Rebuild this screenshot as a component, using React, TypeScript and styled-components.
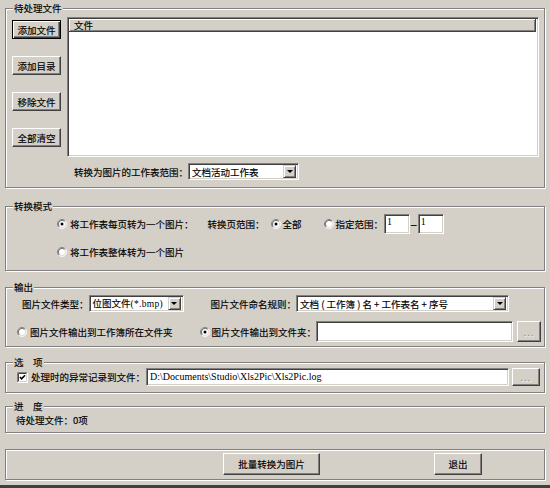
import React from 'react';
import styled, { createGlobalStyle, css } from 'styled-components';

const GlobalStyle = createGlobalStyle`
  html, body { margin: 0; padding: 0; background: #d4d0c8; }
  body {
    font-family: "Noto Sans CJK SC", "Noto Sans", sans-serif;
    font-size: 9.5px;
    line-height: 12px;
    color: #000;
    -webkit-text-stroke: 0.15px #000;
  }
`;

const Window = styled.div`
  width: 550px;
  height: 488px;
  box-sizing: border-box;
  background: #d4d0c8;
  padding: 8px 4px 0 5px;
  border-bottom: 3px solid #404040;
  display: flex;
  flex-direction: column;
  overflow: hidden;
`;

const Group = styled.div<{ $h: number; $mt?: number; $pad?: string }>`
  position: relative;
  box-sizing: border-box;
  width: 540px;
  height: ${p => p.$h}px;
  margin-top: ${p => p.$mt ?? 0}px;
  padding: ${p => p.$pad ?? '0'};
  border: 1px solid #808080;
  box-shadow: 1px 1px 0 #fff, inset 1px 1px 0 #fff;
  flex-shrink: 0;
`;

const Legend = styled.span`
  position: absolute;
  top: -7px;
  left: 7px;
  padding: 0 1px;
  background: #d4d0c8;
  white-space: pre;
`;

const FilesLayout = styled.div`
  display: flex;
  gap: 6px;
`;

const ButtonColumn = styled.div`
  display: flex;
  flex-direction: column;
  gap: 17px;
  margin-top: 3px;
`;

const RightColumn = styled.div`
  flex: 1;
  display: flex;
  flex-direction: column;
`;

const Button = styled.button<{ $w: number; $h: number; $default?: boolean; $disabled?: boolean; $ml?: number }>`
  box-sizing: border-box;
  width: ${p => p.$w}px;
  height: ${p => p.$h}px;
  margin: 0 0 0 ${p => p.$ml ?? 0}px;
  padding: 0;
  font: inherit;
  color: #000;
  background: #d4d0c8;
  border: 1px solid;
  border-color: #fff #404040 #404040 #fff;
  box-shadow: inset -1px -1px 0 #808080;
  flex-shrink: 0;
  cursor: default;
  ${p => p.$default && css`
    border: 1px solid #000;
    box-shadow: inset 1px 1px 0 #fff, inset -1px -1px 0 #404040, inset -2px -2px 0 #808080;
  `}
  ${p => p.$disabled && css`
    color: #808080;
    -webkit-text-stroke: 0;
    text-shadow: 1px 1px 0 #fff;
    letter-spacing: 1px;
  `}
`;

const ListBox = styled.div`
  box-sizing: border-box;
  height: 140px;
  background: #fff;
  border: 1px solid;
  border-color: #808080 #fff #fff #808080;
  box-shadow: inset 1px 1px 0 #404040, inset -1px -1px 0 #d4d0c8;
  padding: 1px 2px 2px 1px;
`;

const ListHeader = styled.div`
  box-sizing: border-box;
  height: 13px;
  background: #d4d0c8;
  border-right: 1px solid #404040;
  border-bottom: 1px solid #404040;
  box-shadow: inset 1px 1px 0 #fff, inset -1px -1px 0 #808080;
  padding-left: 5px;
  line-height: 12px;
`;

const Row = styled.div<{ $h: number; $mt?: number }>`
  display: flex;
  align-items: center;
  height: ${p => p.$h}px;
  margin-top: ${p => p.$mt ?? 0}px;
`;

const Item = styled.div<{ $ml?: number; $gap?: number }>`
  display: flex;
  align-items: center;
  gap: ${p => p.$gap ?? 3}px;
  margin-left: ${p => p.$ml ?? 0}px;
  white-space: nowrap;
  flex-shrink: 0;
`;

const Sunken = css`
  box-sizing: border-box;
  background: #fff;
  border: 1px solid;
  border-color: #808080 #fff #fff #808080;
  box-shadow: inset 1px 1px 0 #404040, inset -1px -1px 0 #d4d0c8;
  flex-shrink: 0;
`;

const Select = styled.div<{ $w: number; $ml?: number }>`
  ${Sunken};
  width: ${p => p.$w}px;
  height: 17px;
  margin-left: ${p => p.$ml ?? 0}px;
  display: flex;
  align-items: center;
  padding: 2px;
`;

const SelectText = styled.span`
  flex: 1;
  min-width: 0;
  padding-left: 1px;
  white-space: pre;
`;

const Latin = styled.span`
  font-family: "Liberation Serif", serif;
  font-size: 9.5px;
  letter-spacing: 0.3px;
  -webkit-text-stroke: 0;
`;

const ArrowButton = styled.span`
  box-sizing: border-box;
  width: 13px;
  height: 13px;
  background: #d4d0c8;
  border: 1px solid;
  border-color: #d4d0c8 #404040 #404040 #d4d0c8;
  box-shadow: inset 1px 1px 0 #fff, inset -1px -1px 0 #808080;
  display: flex;
  align-items: center;
  justify-content: center;
  flex-shrink: 0;
`;

const Arrow = styled.span`
  width: 0;
  height: 0;
  border-left: 3px solid transparent;
  border-right: 3px solid transparent;
  border-top: 3px solid #000;
`;

const TextField = styled.div<{ $w: number; $h: number; $ml?: number; $top?: boolean }>`
  ${Sunken};
  width: ${p => p.$w}px;
  height: ${p => p.$h}px;
  margin-left: ${p => p.$ml ?? 0}px;
  padding: ${p => (p.$top ? '1px 2px' : '0 3px')};
  display: flex;
  align-items: ${p => (p.$top ? 'flex-start' : 'center')};
  font-family: "Liberation Serif", serif;
  font-size: 10px;
  -webkit-text-stroke: 0;
  white-space: nowrap;
  overflow: hidden;
`;

const Dash = styled.span<{ $ml?: number }>`
  margin-left: ${p => p.$ml ?? 0}px;
  margin-top: 2px;
  font-family: "Liberation Sans", sans-serif;
  font-size: 10px;
`;

const Column = styled.div`
  display: flex;
  flex-direction: column;
`;

const StatusText = styled.div`
  padding-left: 0;
`;

const Radio: React.FC<{ checked?: boolean }> = ({ checked }) => (
  <svg width="10" height="10" viewBox="0 0 12 12">
    <circle cx="6" cy="6" r="5" fill="#fff" />
    <path d="M2.11 9.89 A5.5 5.5 0 0 1 9.89 2.11" fill="none" stroke="#808080" strokeWidth="1" />
    <path d="M9.89 2.11 A5.5 5.5 0 0 1 2.11 9.89" fill="none" stroke="#fff" strokeWidth="1" />
    <path d="M2.82 9.18 A4.5 4.5 0 0 1 9.18 2.82" fill="none" stroke="#404040" strokeWidth="1" />
    <path d="M9.18 2.82 A4.5 4.5 0 0 1 2.82 9.18" fill="none" stroke="#d4d0c8" strokeWidth="1" />
    {checked && <circle cx="6" cy="6" r="1.8" fill="#000" />}
  </svg>
);

const CheckBox: React.FC<{ checked?: boolean }> = ({ checked }) => (
  <svg width="11" height="11" viewBox="0 0 11 11">
    <rect x="0" y="0" width="11" height="11" fill="#fff" />
    <path d="M0.5 10.5 V0.5 H10.5" fill="none" stroke="#808080" />
    <path d="M1.5 9.5 V1.5 H9.5" fill="none" stroke="#404040" />
    <path d="M0.5 10.5 H10.5 V0.5" fill="none" stroke="#fff" />
    <path d="M1.5 9.5 H9.5 V1.5" fill="none" stroke="#d4d0c8" />
    {checked && <path d="M3 5 L4.6 6.8 L8 3.2" fill="none" stroke="#000" strokeWidth="1.6" />}
  </svg>
);

export default function App() {
  return (
    <>
      <GlobalStyle />
      <Window>
        <Group $h={180} $pad="8px 5px 0 6px">
          <Legend>待处理文件</Legend>
          <FilesLayout>
            <ButtonColumn>
              <Button $w={49} $h={19} $default>添加文件</Button>
              <Button $w={49} $h={19}>添加目录</Button>
              <Button $w={49} $h={19}>移除文件</Button>
              <Button $w={49} $h={19}>全部清空</Button>
            </ButtonColumn>
            <RightColumn>
              <ListBox>
                <ListHeader>文件</ListHeader>
              </ListBox>
              <Row $h={17} $mt={6}>
                <Item $ml={7}>转换为图片的工作表范围：</Item>
                <Select $w={111}>
                  <SelectText>文档活动工作表</SelectText>
                  <ArrowButton><Arrow /></ArrowButton>
                </Select>
              </Row>
            </RightColumn>
          </FilesLayout>
        </Group>

        <Group $h={65} $mt={18} $pad="7px 0 0 0">
          <Legend>转换模式</Legend>
          <Column>
            <Row $h={20}>
              <Item $ml={51}><Radio checked /><span>将工作表每页转为一个图片：</span></Item>
              <Item $ml={14}>转换页范围：</Item>
              <Item $ml={6} $gap={2}><Radio checked /><span>全部</span></Item>
              <Item $ml={22} $gap={2}><Radio /><span>指定范围：</span></Item>
              <TextField $w={26} $h={20} $ml={1} $top>1</TextField>
              <Dash $ml={1}>–</Dash>
              <TextField $w={26} $h={20} $ml={1} $top>1</TextField>
            </Row>
            <Row $h={20} $mt={8}>
              <Item $ml={51}><Radio /><span>将工作表整体转为一个图片</span></Item>
            </Row>
          </Column>
        </Group>

        <Group $h={60} $mt={16} $pad="7px 0 0 0">
          <Legend>输出</Legend>
          <Column>
            <Row $h={17}>
              <Item $ml={16}>图片文件类型：</Item>
              <Select $w={95}>
                <SelectText>位图文件<Latin>(*.bmp)</Latin></SelectText>
                <ArrowButton><Arrow /></ArrowButton>
              </Select>
              <Item $ml={27}>图片文件命名规则：</Item>
              <Select $w={213}>
                <SelectText>文档 ( 工作簿 ) 名 + 工作表名 + 序号</SelectText>
                <ArrowButton><Arrow /></ArrowButton>
              </Select>
            </Row>
            <Row $h={21} $mt={9}>
              <Item $ml={11}><Radio /><span>图片文件输出到工作簿所在文件夹</span></Item>
              <Item $ml={27} $gap={2}><Radio checked /><span>图片文件输出到文件夹：</span></Item>
              <TextField $w={197} $h={21} />
              <Button $w={24} $h={21} $ml={4} $disabled>...</Button>
            </Row>
          </Column>
        </Group>

        <Group $h={31} $mt={15} $pad="5px 0 0 0">
          <Legend>选　项</Legend>
          <Row $h={18}>
            <Item $ml={11}><CheckBox checked /><span>处理时的异常记录到文件：</span></Item>
            <TextField $w={363} $h={18} $ml={1}>D:\Documents\Studio\Xls2Pic\Xls2Pic.log</TextField>
            <Button $w={28} $h={18} $ml={3} $disabled>...</Button>
          </Row>
        </Group>

        <Group $h={27} $mt={13} $pad="7px 0 0 10px">
          <Legend>进　度</Legend>
          <StatusText>待处理文件：0项</StatusText>
        </Group>

        <Group $h={31} $mt={16} $pad="3px 0 0 0">
          <Row $h={22}>
            <Button $w={97} $h={22} $ml={217}>批量转换为图片</Button>
            <Button $w={48} $h={22} $ml={114}>退出</Button>
          </Row>
        </Group>
      </Window>
    </>
  );
}
